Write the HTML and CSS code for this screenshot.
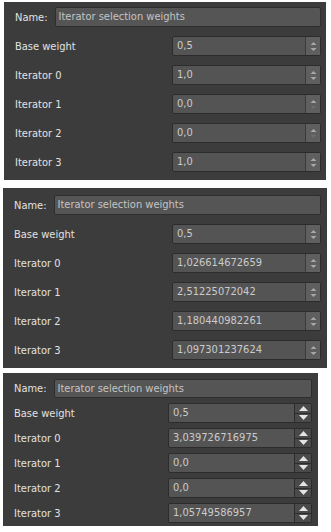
FILE: index.html
```html
<!DOCTYPE html>
<html lang="en">
<head>
    <meta charset="UTF-8">
    <title>Iterator selection weights</title>
    <link rel="stylesheet" href="styles.css">
</head>
<body>
    <!-- first state: defaults -->
    <div class="panel panel-a">
        <div class="name-row">
            <span class="label">Name:</span>
            <div class="name-box">Iterator selection weights</div>
        </div>
        <span class="label">Base weight</span>
        <div class="spin"><span class="value">0,5</span><span class="arrows"><svg width="7" height="11" viewBox="0 0 7 11"><path d="M3.5 1 L6.5 4 L0.5 4 Z M0.5 7 L6.5 7 L3.5 10 Z"/></svg></span></div>
        <span class="label">Iterator 0</span>
        <div class="spin"><span class="value">1,0</span><span class="arrows"><svg width="7" height="11" viewBox="0 0 7 11"><path d="M3.5 1 L6.5 4 L0.5 4 Z M0.5 7 L6.5 7 L3.5 10 Z"/></svg></span></div>
        <span class="label">Iterator 1</span>
        <div class="spin"><span class="value">0,0</span><span class="arrows"><svg width="7" height="11" viewBox="0 0 7 11"><path d="M3.5 1 L6.5 4 L0.5 4 Z"/><path class="off" d="M0.5 7 L6.5 7 L3.5 10 Z"/></svg></span></div>
        <span class="label">Iterator 2</span>
        <div class="spin"><span class="value">0,0</span><span class="arrows"><svg width="7" height="11" viewBox="0 0 7 11"><path d="M3.5 1 L6.5 4 L0.5 4 Z"/><path class="off" d="M0.5 7 L6.5 7 L3.5 10 Z"/></svg></span></div>
        <span class="label">Iterator 3</span>
        <div class="spin"><span class="value">1,0</span><span class="arrows"><svg width="7" height="11" viewBox="0 0 7 11"><path d="M3.5 1 L6.5 4 L0.5 4 Z M0.5 7 L6.5 7 L3.5 10 Z"/></svg></span></div>
    </div>

    <!-- second state: after randomizing -->
    <div class="panel panel-b">
        <div class="name-row">
            <span class="label">Name:</span>
            <div class="name-box">Iterator selection weights</div>
        </div>
        <span class="label">Base weight</span>
        <div class="spin"><span class="value">0,5</span><span class="arrows"><svg width="7" height="11" viewBox="0 0 7 11"><path d="M3.5 1 L6.5 4 L0.5 4 Z M0.5 7 L6.5 7 L3.5 10 Z"/></svg></span></div>
        <span class="label">Iterator 0</span>
        <div class="spin"><span class="value">1,026614672659</span><span class="arrows"><svg width="7" height="11" viewBox="0 0 7 11"><path d="M3.5 1 L6.5 4 L0.5 4 Z M0.5 7 L6.5 7 L3.5 10 Z"/></svg></span></div>
        <span class="label">Iterator 1</span>
        <div class="spin"><span class="value">2,51225072042</span><span class="arrows"><svg width="7" height="11" viewBox="0 0 7 11"><path d="M3.5 1 L6.5 4 L0.5 4 Z M0.5 7 L6.5 7 L3.5 10 Z"/></svg></span></div>
        <span class="label">Iterator 2</span>
        <div class="spin"><span class="value">1,180440982261</span><span class="arrows"><svg width="7" height="11" viewBox="0 0 7 11"><path d="M3.5 1 L6.5 4 L0.5 4 Z M0.5 7 L6.5 7 L3.5 10 Z"/></svg></span></div>
        <span class="label">Iterator 3</span>
        <div class="spin"><span class="value">1,097301237624</span><span class="arrows"><svg width="7" height="11" viewBox="0 0 7 11"><path d="M3.5 1 L6.5 4 L0.5 4 Z M0.5 7 L6.5 7 L3.5 10 Z"/></svg></span></div>
    </div>

    <!-- third state: compact style with split buttons -->
    <div class="panel panel-c">
        <div class="name-row">
            <span class="label">Name:</span>
            <div class="name-box">Iterator selection weights</div>
        </div>
        <span class="label">Base weight</span>
        <div class="spin"><span class="value">0,5</span><span class="buttons"><span class="btn"><svg width="9" height="5" viewBox="0 0 9 5"><path d="M4.5 0 L9 5 L0 5 Z"/></svg></span><span class="btn"><svg width="9" height="5" viewBox="0 0 9 5"><path d="M0 0 L9 0 L4.5 5 Z"/></svg></span></span></div>
        <span class="label">Iterator 0</span>
        <div class="spin"><span class="value">3,039726716975</span><span class="buttons"><span class="btn"><svg width="9" height="5" viewBox="0 0 9 5"><path d="M4.5 0 L9 5 L0 5 Z"/></svg></span><span class="btn"><svg width="9" height="5" viewBox="0 0 9 5"><path d="M0 0 L9 0 L4.5 5 Z"/></svg></span></span></div>
        <span class="label">Iterator 1</span>
        <div class="spin"><span class="value">0,0</span><span class="buttons"><span class="btn"><svg width="9" height="5" viewBox="0 0 9 5"><path d="M4.5 0 L9 5 L0 5 Z"/></svg></span><span class="btn"><svg width="9" height="5" viewBox="0 0 9 5"><path d="M0 0 L9 0 L4.5 5 Z"/></svg></span></span></div>
        <span class="label">Iterator 2</span>
        <div class="spin"><span class="value">0,0</span><span class="buttons"><span class="btn"><svg width="9" height="5" viewBox="0 0 9 5"><path d="M4.5 0 L9 5 L0 5 Z"/></svg></span><span class="btn"><svg width="9" height="5" viewBox="0 0 9 5"><path d="M0 0 L9 0 L4.5 5 Z"/></svg></span></span></div>
        <span class="label">Iterator 3</span>
        <div class="spin"><span class="value">1,05749586957</span><span class="buttons"><span class="btn"><svg width="9" height="5" viewBox="0 0 9 5"><path d="M4.5 0 L9 5 L0 5 Z"/></svg></span><span class="btn"><svg width="9" height="5" viewBox="0 0 9 5"><path d="M0 0 L9 0 L4.5 5 Z"/></svg></span></span></div>
    </div>
</body>
</html>
```

FILE: styles.css
```css
body {
    margin: 0;
    background: #ffffff;
    font-family: "DejaVu Sans Condensed", "DejaVu Sans", sans-serif;
    font-size: 11px;
}

.panel {
    background-color: #3c3c3c;
    display: grid;
    grid-template-columns: 1fr 149px;
    align-items: center;
    row-gap: 9px;
    padding: 5px 5px 8px 11px;
    box-sizing: border-box;
}

.panel-a {
    margin: 2px 0 0 4px;
    width: 322px;
}

.panel-b {
    margin: 8px 0 0 3px;
    width: 324px;
    padding-top: 7px;
    padding-right: 6px;
}

.panel-c {
    margin: 5px 0 0 3px;
    width: 315px;
    row-gap: 5px;
    padding-top: 6px;
    padding-right: 6px;
    padding-bottom: 3px;
    grid-template-columns: 1fr 144px;
}

.label {
    color: #e2e2e2;
    white-space: nowrap;
}

.name-row {
    grid-column: 1 / 3;
    display: flex;
    align-items: center;
    gap: 7px;
}

.name-box {
    flex: 1;
    height: 20px;
    line-height: 18px;
    box-sizing: border-box;
    padding-left: 3px;
    background-color: #555555;
    border: 1px solid #2e2e2e;
    border-radius: 2px;
    color: #c4c4c4;
}

.panel-c .name-box {
    height: 19px;
    line-height: 17px;
}

.spin {
    display: flex;
    height: 20px;
    box-sizing: border-box;
    background-color: #545454;
    border: 1px solid #2c2c2c;
    border-radius: 2px;
}

.value {
    flex: 1;
    line-height: 18px;
    padding-left: 4px;
    color: #cbcbcb;
}

.arrows {
    width: 14px;
    display: flex;
    align-items: center;
    justify-content: center;
    background-color: #5f5f5f;
    border-left: 1px solid #3a3a3a;
}

.arrows svg {
    fill: #a8a8a8;
}

.arrows .off {
    fill: #6e6e6e;
}

.buttons {
    width: 16px;
    display: flex;
    flex-direction: column;
    border-left: 1px solid #2c2c2c;
}

.btn {
    flex: 1;
    display: flex;
    align-items: center;
    justify-content: center;
    background-color: #4a4a4a;
}

.btn + .btn {
    border-top: 1px solid #2c2c2c;
}

.btn svg {
    fill: #e4e4e4;
}
```
